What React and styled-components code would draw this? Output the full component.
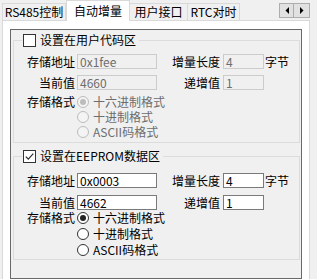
import React from 'react';
import styled, { createGlobalStyle } from 'styled-components';

const GlobalStyle = createGlobalStyle`
  html, body {
    margin: 0;
    padding: 0;
    background: #f0f0f0;
    overflow: hidden;
  }
  body {
    font-family: "Noto Sans CJK SC", "Noto Sans", sans-serif;
    font-size: 12px;
    line-height: 14px;
    color: #000;
  }
`;

const Window = styled.div`
  width: 317px;
  height: 279px;
  padding-left: 2px;
  box-sizing: border-box;
  display: flex;
  flex-direction: column;
`;

const TabStrip = styled.div`
  display: flex;
  align-items: flex-end;
  height: 20px;
  width: 308px;
  flex: none;
`;

const Tab = styled.div`
  box-sizing: border-box;
  width: ${p => p.$w}px;
  height: ${p => (p.$active ? 21 : 17)}px;
  margin-bottom: ${p => (p.$active ? -1 : 0)}px;
  border: 1px solid #d9d9d9;
  border-bottom: none;
  border-left: ${p => (p.$first || p.$active ? '1px solid #d9d9d9' : 'none')};
  background: ${p => (p.$active ? '#fff' : '#f0f0f0')};
  position: relative;
  z-index: ${p => (p.$active ? 1 : 0)};
  display: flex;
  align-items: center;
  justify-content: center;
  line-height: 14px;
  white-space: nowrap;
`;

const ArrowPair = styled.div`
  display: flex;
  align-self: flex-start;
  margin: 3px 0 0 auto;
`;

const ArrowButton = styled.div`
  box-sizing: border-box;
  width: ${p => (p.$right ? 16 : 15)}px;
  height: 15px;
  border: 1px solid #adadad;
  border-left: ${p => (p.$right ? 'none' : '1px solid #adadad')};
  background: #e1e1e1;
  display: flex;
  align-items: center;
  justify-content: center;
`;

const Page = styled.div`
  flex: 1;
  width: 308px;
  box-sizing: border-box;
  background: #fff;
  border: 1px solid #d9d9d9;
  border-bottom: none;
  padding: 8px 7px 0 7px;
  display: flex;
  flex-direction: column;
`;

const Panel = styled.div`
  flex: 1;
  background: #f0f0f0;
  border: 1px solid #696969;
  padding: 3px 1px 0 2px;
  display: flex;
  flex-direction: column;
  gap: 6px;
`;

const Group = styled.fieldset`
  margin: 0;
  padding: 0 0 ${p => p.$pb}px 0;
  border: 1px solid #dcdcdc;
  min-width: 0;
  display: flex;
  flex-direction: column;
`;

const Legend = styled.legend`
  margin-left: 8px;
  padding: 0 3px 0 1px;
  height: 14px;
  line-height: 14px;
  display: flex;
  align-items: center;
  gap: 4px;
`;

const CheckBox = styled.span`
  box-sizing: border-box;
  width: 13px;
  height: 13px;
  border: 1px solid #333;
  background: #fff;
  display: flex;
  align-items: center;
  justify-content: center;
  flex: none;
`;

const Fields = styled.div`
  display: flex;
  flex-direction: column;
  gap: ${p => p.$gap}px;
  margin-top: ${p => p.$top}px;
`;

const Row = styled.div`
  display: flex;
  align-items: center;
  height: 15px;
`;

const Label = styled.span`
  width: ${p => p.$w}px;
  height: ${p => p.$h || 15}px;
  text-align: right;
  line-height: ${p => p.$h || 15}px;
  white-space: nowrap;
  flex: none;
`;

const TextBox = styled.div`
  box-sizing: border-box;
  width: ${p => p.$w}px;
  height: 15px;
  margin-left: ${p => p.$ml}px;
  border: 1px solid ${p => (p.$disabled ? '#cccccc' : '#7a7a7a')};
  background: ${p => (p.$disabled ? '#f0f0f0' : '#fff')};
  color: ${p => (p.$disabled ? '#6d6d6d' : '#000')};
  padding-left: 2px;
  line-height: 13px;
  flex: none;
`;

const Unit = styled.span`
  margin-left: 1px;
  line-height: 15px;
`;

const FormatBlock = styled.div`
  display: flex;
  margin-top: ${p => p.$top}px;
`;

const RadioList = styled.div`
  display: flex;
  flex-direction: column;
  margin-left: 2px;
`;

const RadioRow = styled.div`
  display: flex;
  align-items: center;
  height: ${p => p.$h}px;
  line-height: ${p => p.$h}px;
  gap: 4px;
  color: ${p => (p.$disabled ? '#6d6d6d' : '#000')};
  white-space: nowrap;
`;

const RadioCircle = styled.span`
  box-sizing: border-box;
  width: 12px;
  height: 12px;
  border-radius: 50%;
  border: 1px solid ${p => (p.$disabled ? '#bcbcbc' : '#333')};
  background: ${p => (p.$disabled ? '#f4f4f4' : '#fff')};
  display: flex;
  align-items: center;
  justify-content: center;
  flex: none;
  &::after {
    content: '';
    width: 6px;
    height: 6px;
    border-radius: 50%;
    background: ${p => (p.$disabled ? '#bcbcbc' : '#222')};
    display: ${p => (p.$checked ? 'block' : 'none')};
  }
`;

const Check = () => (
  <svg width="11" height="11" viewBox="0 0 11 11">
    <path d="M1.8 5.6 L4.3 8.1 L9.3 2.6" fill="none" stroke="#333" strokeWidth="1.3" />
  </svg>
);

const formats = ['十六进制格式', '十进制格式', 'ASCII码格式'];

const SettingGroup = ({ title, checked, disabled, addr, current, len, step, pb, top, gap, fmtTop, radioH }) => (
  <Group $pb={pb}>
    <Legend>
      <CheckBox>{checked && <Check />}</CheckBox>
      {title}
    </Legend>
    <Fields $top={top} $gap={gap}>
      <Row>
        <Label $w={61}>存储地址</Label>
        <TextBox $w={80} $ml={2} $disabled={disabled}>{addr}</TextBox>
        <Label $w={63}>增量长度</Label>
        <TextBox $w={41} $ml={3} $disabled={disabled}>{len}</TextBox>
        <Unit>字节</Unit>
      </Row>
      <Row>
        <Label $w={61}>当前值</Label>
        <TextBox $w={80} $ml={2} $disabled={disabled}>{current}</TextBox>
        <Label $w={63}>递增值</Label>
        <TextBox $w={41} $ml={3} $disabled={disabled}>{step}</TextBox>
      </Row>
    </Fields>
    <FormatBlock $top={fmtTop}>
      <Label $w={61} $h={radioH}>存储格式</Label>
      <RadioList>
        {formats.map((f, i) => (
          <RadioRow key={f} $h={radioH} $disabled={disabled}>
            <RadioCircle $checked={i === 0} $disabled={disabled} />
            {f}
          </RadioRow>
        ))}
      </RadioList>
    </FormatBlock>
  </Group>
);

const Arrow = ({ dir }) => (
  <svg width="4" height="7" viewBox="0 0 4 7">
    {dir === 'left'
      ? <polygon points="4,0 4,7 0.5,3.5" fill="#000" />
      : <polygon points="0,0 0,7 3.5,3.5" fill="#000" />}
  </svg>
);

export default function App() {
  return (
    <>
      <GlobalStyle />
      <Window>
        <TabStrip>
          <Tab $w={64} $first>RS485控制</Tab>
          <Tab $w={64} $active>自动增量</Tab>
          <Tab $w={58}>用户接口</Tab>
          <Tab $w={52}>RTC对时</Tab>
          <ArrowPair>
            <ArrowButton><Arrow dir="left" /></ArrowButton>
            <ArrowButton $right><Arrow dir="right" /></ArrowButton>
          </ArrowPair>
        </TabStrip>
        <Page>
          <Panel>
            <SettingGroup
              title="设置在用户代码区"
              disabled
              addr="0x1fee"
              current="4660"
              len="4"
              step="1"
              pb={3}
              top={7}
              gap={6}
              fmtTop={4}
              radioH={15}
            />
            <SettingGroup
              title="设置在EEPROM数据区"
              checked
              addr="0x0003"
              current="4662"
              len="4"
              step="1"
              pb={1}
              top={10}
              gap={7}
              fmtTop={0}
              radioH={16}
            />
          </Panel>
        </Page>
      </Window>
    </>
  );
}
